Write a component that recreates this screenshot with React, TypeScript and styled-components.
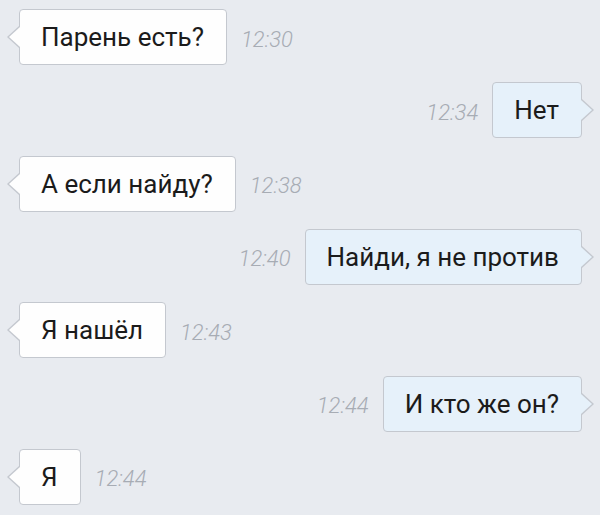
import React from "react";
import styled, { createGlobalStyle, css } from "styled-components";

const Global = createGlobalStyle`
  html, body {
    margin: 0;
    padding: 0;
    background: #e8ebf0;
  }
  body {
    font-family: Roboto, "Noto Sans", sans-serif;
  }
`;

const Chat = styled.div`
  width: 600px;
  height: 515px;
  box-sizing: border-box;
  padding-top: 9px;
  display: flex;
  flex-direction: column;
  gap: 17.33px;
  background: #e8ebf0;
  overflow: hidden;
`;

const Row = styled.div<{ $out: boolean }>`
  display: flex;
  align-items: center;
  gap: 14px;
  justify-content: flex-start;
  flex-direction: ${(p) => (p.$out ? "row-reverse" : "row")};
  padding: ${(p) => (p.$out ? "0 18px 0 0" : "0 0 0 19px")};
`;

const Bubble = styled.div<{ $out: boolean }>`
  position: relative;
  box-sizing: border-box;
  height: 56px;
  padding: 0 22px 0 21px;
  display: flex;
  align-items: center;
  font-size: 26px;
  line-height: 30px;
  color: #1b1b1b;
  border: 1px solid #c4c8cf;
  border-radius: 4px;
  background: ${(p) => (p.$out ? "#e6f1fa" : "#fefefe")};
  white-space: nowrap;

  &::before,
  &::after {
    content: "";
    position: absolute;
    top: 50%;
    width: 0;
    height: 0;
    border-style: solid;
  }

  ${(p) =>
    p.$out
      ? css`
          &::before {
            right: -13px;
            margin-top: -11px;
            border-width: 11px 0 11px 12px;
            border-color: transparent transparent transparent #c4c8cf;
          }
          &::after {
            right: -11px;
            margin-top: -10px;
            border-width: 10px 0 10px 11px;
            border-color: transparent transparent transparent #e6f1fa;
          }
        `
      : css`
          &::before {
            left: -13px;
            margin-top: -11px;
            border-width: 11px 12px 11px 0;
            border-color: transparent #c4c8cf transparent transparent;
          }
          &::after {
            left: -11px;
            margin-top: -10px;
            border-width: 10px 11px 10px 0;
            border-color: transparent #fefefe transparent transparent;
          }
        `}
`;

const Time = styled.span`
  font-family: Roboto, "Noto Sans", sans-serif;
  font-style: italic;
  font-weight: 300;
  font-size: 22px;
  color: #a7acb4;
  padding-top: 4px;
`;

const messages: { text: string; time: string; out: boolean }[] = [
  { text: "Парень есть?", time: "12:30", out: false },
  { text: "Нет", time: "12:34", out: true },
  { text: "А если найду?", time: "12:38", out: false },
  { text: "Найди, я не против", time: "12:40", out: true },
  { text: "Я нашёл", time: "12:43", out: false },
  { text: "И кто же он?", time: "12:44", out: true },
  { text: "Я", time: "12:44", out: false },
];

export default function App() {
  return (
    <>
      <Global />
      <Chat>
        {messages.map((m, i) => (
          <Row key={i} $out={m.out}>
            <Bubble $out={m.out}>{m.text}</Bubble>
            <Time>{m.time}</Time>
          </Row>
        ))}
      </Chat>
    </>
  );
}
